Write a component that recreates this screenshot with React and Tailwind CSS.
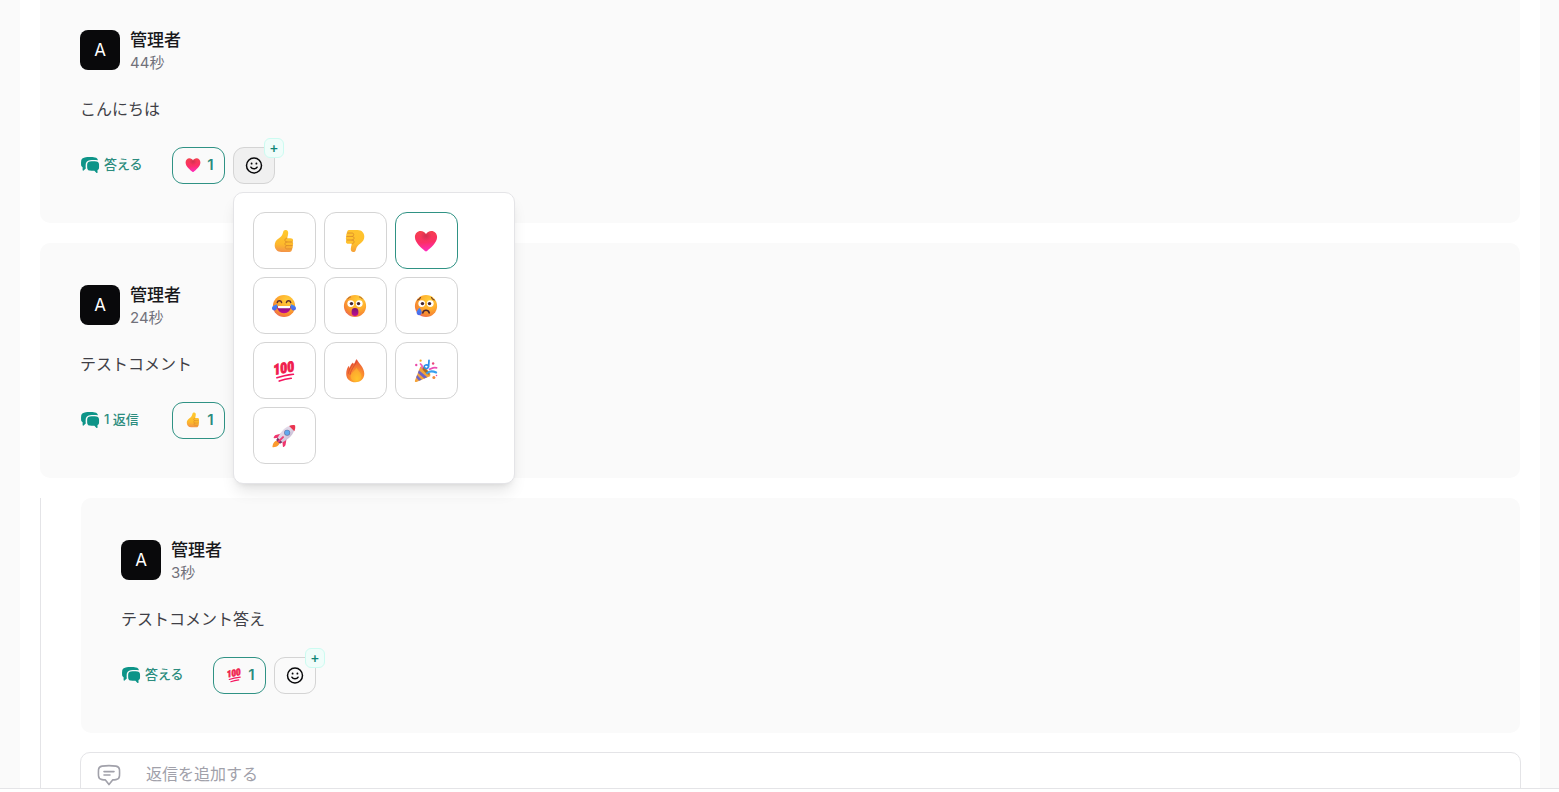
import React from "react";

function Gradients() {
  return (
    <svg className="absolute size-0" aria-hidden="true">
      <defs>
        <linearGradient id="skin" x1="0.4" y1="0" x2="0.3" y2="1">
          <stop offset="0" stopColor="#ffc92e" />
          <stop offset="0.65" stopColor="#fdb92c" />
          <stop offset="1" stopColor="#f3914a" />
        </linearGradient>
        <linearGradient id="skinDown" x1="0.6" y1="1" x2="0.5" y2="0">
          <stop offset="0" stopColor="#ffc42e" />
          <stop offset="0.6" stopColor="#ffc02c" />
          <stop offset="1" stopColor="#f5a03c" />
        </linearGradient>
        <radialGradient id="face" cx="0.65" cy="0.25" r="0.85">
          <stop offset="0" stopColor="#ffd03b" />
          <stop offset="0.45" stopColor="#ffaf2e" />
          <stop offset="0.8" stopColor="#f68433" />
          <stop offset="1" stopColor="#e8606c" />
        </radialGradient>
        <linearGradient id="heart" x1="0.4" y1="0" x2="0.5" y2="1">
          <stop offset="0" stopColor="#f4404e" />
          <stop offset="0.55" stopColor="#fb2f66" />
          <stop offset="1" stopColor="#ff2bc0" />
        </linearGradient>
        <radialGradient id="heartShade" cx="0.5" cy="0.24" r="0.26">
          <stop offset="0" stopColor="#b82a4c" stopOpacity="0.6" />
          <stop offset="1" stopColor="#b82a4c" stopOpacity="0" />
        </radialGradient>
        <linearGradient id="mouth" x1="0" y1="0" x2="0" y2="1">
          <stop offset="0" stopColor="#7c1573" />
          <stop offset="1" stopColor="#c10b95" />
        </linearGradient>
        <linearGradient id="tear" x1="0" y1="0" x2="0" y2="1">
          <stop offset="0" stopColor="#3f8df5" />
          <stop offset="1" stopColor="#4f63e8" />
        </linearGradient>
        <radialGradient id="flame" cx="0.6" cy="0.85" r="0.8">
          <stop offset="0" stopColor="#ffc62b" />
          <stop offset="0.45" stopColor="#fb8f2f" />
          <stop offset="1" stopColor="#e8533b" />
        </radialGradient>
        <linearGradient id="hull" x1="0" y1="0" x2="1" y2="1">
          <stop offset="0" stopColor="#e9e3ee" />
          <stop offset="0.5" stopColor="#ddd3e4" />
          <stop offset="1" stopColor="#b3a4c4" />
        </linearGradient>
      </defs>
    </svg>
  );
}

function Thumb({ fill }) {
  return (
    <>
      <path
        fill={fill}
        d="M14.800 4.200C15.200 2 16.600 1 18.400 1.200c2.400.2 3.400 2 3.200 4.400-.1 2.200-.7 4.400-1.500 6.600h4.600c2.100 0 3.400 1.200 3.400 2.900 0 1-.3 1.700-.9 2.200.7.600 1.100 1.400 1 2.500 0 1-.4 1.800-1 2.300.4.600.6 1.300.5 2.200-.1 1.100-.6 1.800-1.300 2.300.2.500.2 1 .1 1.500-.3 1.600-1.500 2.500-3.300 2.500H12.500C7 30.600 3.600 26.800 3.600 21.600c0-3.900 2-6.700 5.200-8.900 3.200-2.200 5.200-4.500 6-8.500z"
      />
      <path
        fill="none"
        stroke="#d98a2a"
        strokeWidth="1.100"
        strokeLinecap="round"
        d="M27.200 17.300h-7.400c-1.700 0-2.500-1-2.500-2.400s.9-2.600 2.600-2.700M27.200 22.100h-7.400c-1.700 0-2.500-.9-2.500-2.300s.9-2.400 2.500-2.500M26.400 26.600h-6.200c-1.700 0-2.500-.8-2.500-2.100s.8-2.300 2.100-2.400"
      />
    </>
  );
}

function Eyes() {
  return (
    <>
      <circle cx="10.300" cy="12.800" r="4.500" fill="#fff" />
      <circle cx="21.700" cy="12.800" r="4.500" fill="#fff" />
      <circle cx="11.300" cy="12.800" r="2.300" fill="#42242f" />
      <circle cx="20.700" cy="12.800" r="2.300" fill="#42242f" />
    </>
  );
}

const heartShape =
  "M8.900 2.600C4.700 2.600 1.200 6 1.200 10.800c0 8 9.300 15 13.400 18.600.9.800 1.900.8 2.800 0 4.100-3.600 13.400-10.600 13.400-18.600 0-4.800-3.500-8.200-7.700-8.200-3.200 0-5.900 1.900-7.100 4.400-1.200-2.500-3.900-4.400-7.100-4.400z";

const drawings = {
  up: <Thumb fill="url(#skin)" />,
  down: (
    <g transform="rotate(180 16 16)">
      <Thumb fill="url(#skinDown)" />
    </g>
  ),
  heart: (
    <>
      <path fill="url(#heart)" d={heartShape} />
      <path fill="url(#heartShade)" d={heartShape} />
    </>
  ),
  joy: (
    <>
      <circle cx="16" cy="16" r="14.800" fill="url(#face)" />
      <path
        d="M7 11.300c.8-3 5-3 5.800 0M19.200 11.300c.8-3 5-3 5.800 0"
        fill="none"
        stroke="#5b2a2e"
        strokeWidth="1.900"
        strokeLinecap="round"
      />
      <path d="M6.800 16h18.400c0 5.600-3.600 9.600-9.200 9.600S6.800 21.600 6.800 16z" fill="url(#mouth)" />
      <path d="M7.800 16h16.400v1.600c0 .9-.7 1.500-1.600 1.500H9.400c-.9 0-1.600-.6-1.600-1.500z" fill="#fff" />
      <path
        d="M6.900 13.600c.6 4.200-.5 8-3.300 8.300C1.400 22.100 0 20.700 0 18.900c0-2.900 3.500-4 6.900-5.300zM25.100 13.600c-.6 4.200.5 8 3.300 8.300 2.200.2 3.600-1.200 3.600-3 0-2.900-3.500-4-6.900-5.300z"
        fill="url(#tear)"
      />
    </>
  ),
  wow: (
    <>
      <circle cx="16" cy="16" r="14.800" fill="url(#face)" />
      <path
        d="M6.300 6.500c.8-1.400 2-2.200 3.600-2.500M25.700 6.500c-.8-1.400-2-2.200-3.600-2.500"
        fill="none"
        stroke="#a05a2c"
        strokeWidth="1.200"
        strokeLinecap="round"
      />
      <Eyes />
      <rect x="11.500" y="18.800" width="9" height="10.400" rx="4.500" fill="url(#mouth)" />
    </>
  ),
  cry: (
    <>
      <circle cx="16" cy="16" r="14.800" fill="url(#face)" />
      <path
        d="M5 8c1.600-.4 2.900-1.600 3.700-3.300M27 8c-1.600-.4-2.900-1.600-3.700-3.300"
        fill="none"
        stroke="#6b3a2a"
        strokeWidth="1.500"
        strokeLinecap="round"
      />
      <Eyes />
      <path
        d="M11.600 25.200c1.500-4.600 7.300-4.600 8.800 0"
        fill="none"
        stroke="#4a2430"
        strokeWidth="2"
        strokeLinecap="round"
      />
      <path d="M7.300 18.400c1.800 2.600 3 4.300 3 6.400 0 2.200-1.500 3.600-3.400 3.600s-3.400-1.400-3.400-3.600c0-2.100 1.700-3.800 3.800-6.400z" fill="url(#tear)" />
    </>
  ),
  hundred: (
    <>
      <g transform="rotate(-10 16 12)">
        <text
          x="15.500"
          y="18.500"
          textAnchor="middle"
          fontFamily="'Liberation Sans Narrow', 'Roboto Condensed', 'Open Sans', sans-serif"
          fontSize="19"
          fontWeight="700"
          fontStyle="italic"
          fill="#f01c4c"
          stroke="#f01c4c"
          strokeWidth="1.200"
        >
          100
        </text>
      </g>
      <path
        d="M6.500 25C13 22.600 20 21.200 28.500 20.300M9.600 29.400c4.800-1.700 9.800-3 16-3.700"
        fill="none"
        stroke="#f5155f"
        strokeWidth="2.200"
        strokeLinecap="round"
      />
    </>
  ),
  fire: (
    <>
      <path
        fill="url(#flame)"
        d="M17.200 1.300c.3-.7 1.300-.7 1.700 0 2.300 4.500 9.500 10.200 9.500 18.400C28.400 26.700 23.100 31 16.500 31S4.300 26.700 4.300 19.900c0-3.900 1-7.300 2.500-9.600.4-.7 1.300-.6 1.600.1l.8 1.900c.3-3.200 1.700-5.600 3.300-7 .6-.5 1.400-.2 1.500.5l.3 1.300c1.300-1.800 2.200-3.800 2.900-5.800z"
      />
      <path
        d="M17.800 3.400C16.600 8.500 11 12.300 9.400 20.500M12.600 7.500C9.800 11.500 7.800 14.800 7.400 19"
        fill="none"
        stroke="#d9482f"
        strokeWidth="1.100"
        strokeLinecap="round"
      />
      <path
        d="M18 11.500c1.800 3.600 6.400 6.500 6.400 11.300 0 4-3.400 6.700-7.600 6.700s-6.600-2.800-6.600-6.500c0-4.800 5.600-7 7.800-11.500z"
        fill="#ffc02d"
        opacity="0.55"
      />
    </>
  ),
  party: (
    <>
      <path d="M8.500 10 1.300 28.500c-.6 1.500.6 2.600 2 2L22 22.500z" fill="#f5a33a" />
      <path d="M6.600 14.900 17.600 24.400l-3.900 1.700L5.200 18.500zM4.100 21.300l6.200 6.200-3.600 1.600-3.800-4.500z" fill="#6b63c6" />
      <ellipse cx="15.300" cy="16.300" rx="3.200" ry="8.700" transform="rotate(-45 15.300 16.300)" fill="#f0a637" />
      <ellipse cx="15.700" cy="15.900" rx="1.900" ry="6.800" transform="rotate(-45 15.700 15.900)" fill="#a8682f" />
      <path
        d="M15.500 12.500c-2.300-.5-2.700-3.800 0-4.500 3-.7 4.900 1.500 3.300 3.500-1.400 1.700-3.200 1.200-3.300 1M19.400 10.500 20 1.800"
        stroke="#2f8fe8"
        strokeWidth="2.300"
        fill="none"
        strokeLinecap="round"
      />
      <path d="M17.500 18.700c3-2.500 7-3.200 12-.7" stroke="#35a0ef" strokeWidth="2.800" fill="none" strokeLinecap="round" />
      <path d="M20.800 13.500c2.400.8 3.200-3.400 9.400-1.700" stroke="#ec4fb4" strokeWidth="2.300" fill="none" strokeLinecap="round" />
      <path d="M10.800 12c.5-2.400-.2-4.200-2.200-5.400" stroke="#f062b8" strokeWidth="2.200" fill="none" strokeLinecap="round" />
      <circle cx="8.800" cy="2.200" r="1.500" fill="#f5a623" />
      <circle cx="3" cy="8" r="1.600" fill="#ea4aa8" />
      <circle cx="25.500" cy="6" r="1.600" fill="#e8467d" />
      <circle cx="26.500" cy="24.800" r="2" fill="#f08a3c" />
      <circle cx="30" cy="22" r="1" fill="#ea4aa8" />
    </>
  ),
  rocket: (
    <>
      <path d="M8 22.500c-3.300-.8-6.800 1.500-7.400 7.400-.1.800.4 1.300 1.200 1.200 5.700-.6 8.500-3.800 8-6.800z" fill="#fb9a2e" />
      <path d="M12.500 12.600 5 14.800c-1.200.4-2.300 1.700-2.800 3.300-.2.600.3 1 .9.900l5.700-.6zM19.400 19.500l-1.300 8.300c-.3 1.300-1.200 2.300-2.600 2.900-.6.200-1-.2-1-.8l-.6-5.800z" fill="#f0366e" />
      <path d="M29.800 2.200c1.200 6.600-2.500 12.800-8.500 17.300-3 2.300-6.500 4.500-8.800 5.300L7.200 19.500c.8-2.300 3-5.800 5.300-8.800C17 4.700 23.200 1 29.800 2.200z" fill="url(#hull)" />
      <path d="M22.800 2.500c2.300-.9 4.900-1.300 7.500-.9.300 0 .5.200.5.500.5 2.600.1 5.200-1 7.600z" fill="#ea3450" />
      <path d="M7.600 18.300l6.200 6.100-2.500 1.600c-.5.300-1.100.2-1.500-.2l-3.600-3.600c-.4-.4-.5-1-.2-1.500z" fill="#7a3566" />
      <path d="M14.700 17.500 9 23.200" stroke="#ed3f7a" strokeWidth="2.600" strokeLinecap="round" />
      <circle cx="20.200" cy="11.600" r="4" fill="#6577a8" />
      <circle cx="20.200" cy="11.600" r="3.200" fill="#5fa9ef" />
    </>
  ),
};

const names = {
  up: "いいね",
  down: "よくないね",
  heart: "ハート",
  joy: "うれし泣き",
  wow: "びっくり",
  cry: "泣き顔",
  hundred: "満点",
  fire: "炎",
  party: "お祝い",
  rocket: "ロケット",
};

function Emoji({ kind, className }) {
  return (
    <svg viewBox="0 0 32 32" className={className} aria-hidden="true">
      {drawings[kind]}
    </svg>
  );
}

function RepliesIcon() {
  return (
    <svg viewBox="0 0 20 20" className="size-5 shrink-0" fill="#0d9488" aria-hidden="true">
      <path d="M4.700 2.400c3.200-.5 7-.5 10.300 0 1.700.2 2.800 1.300 2.900 2.800-2.800-.3-5.600-.3-8 0C7 5.600 5.800 7.100 5.700 9.400c-.1 1.500-.1 2.800.1 4l-2.200 2.100c-.4.400-1 .1-1-.4v-2.900c-.9-.4-1.400-1.200-1.500-2.200-.1-1.500-.1-3 .1-4.500.2-1.600 1.600-2.800 3.500-3.100z" />
      <path d="M9.900 6.400c2.100-.3 4.400-.3 6.500 0 1.500.2 2.500 1.200 2.600 2.600.1 1.400.1 2.600 0 3.900-.1 1-.6 1.800-1.500 2.200v2.400c0 .5-.6.800-1 .4l-2.100-2.100c-1.600.1-3.200 0-4.600-.2-1.500-.2-2.500-1.300-2.600-2.700-.1-1.300-.1-2.500 0-3.900.1-1.400 1.200-2.400 2.700-2.600z" />
    </svg>
  );
}

function SmileIcon() {
  return (
    <svg viewBox="0 0 18 18" className="size-[18px]" fill="none" stroke="#09090b" strokeWidth="1.500" strokeLinecap="round" aria-hidden="true">
      <circle cx="9" cy="8.500" r="7.500" />
      <path d="M5.900 10.200c1.200 2.200 5 2.200 6.200 0" />
      <path d="M6.600 6.300v.4M11.400 6.300v.4" strokeWidth="1.800" />
    </svg>
  );
}

const choices = ["up", "down", "heart", "joy", "wow", "cry", "hundred", "fire", "party", "rocket"];

function Picker({ selected }) {
  return (
    <div
      role="dialog"
      aria-label="リアクション"
      className="absolute left-0 top-full z-10 mt-2 flex w-[282px] flex-wrap gap-2 rounded-[10px] border border-[#e4e4e7] bg-white p-[19px] shadow-lg"
    >
      {choices.map((kind) => (
        <button
          key={kind}
          type="button"
          aria-label={names[kind]}
          aria-pressed={kind === selected}
          className={
            kind === selected
              ? "flex h-[57px] w-[63px] items-center justify-center rounded-xl border border-[#2f9284] pr-px"
              : "flex h-[57px] w-[63px] items-center justify-center rounded-xl border border-[#d4d4d4] pr-px"
          }
        >
          <Emoji kind={kind} className="size-6 overflow-visible" />
        </button>
      ))}
    </div>
  );
}

function Comment({ time, text, replies, reaction, open, first }) {
  return (
    <article
      className={
        first
          ? "rounded-b-[10px] bg-[#fafafa] px-10 pb-[39px] pt-[30px]"
          : "rounded-[10px] bg-[#fafafa] px-10 pb-[39px] pt-[42px]"
      }
    >
      <header className="flex h-10 gap-2.5">
        <div className="flex size-10 items-center justify-center rounded-lg bg-[#09090b] text-[17px] leading-6 text-white">A</div>
        <div>
          <h3 className="text-[17px] font-medium leading-[21px] text-[#18181b]">管理者</h3>
          <p className="text-[15px] leading-6 text-[#71717a]">{time}</p>
        </div>
      </header>
      <p className="mt-6 text-base leading-[30px] text-[#3f3f46]">{text}</p>
      <div className="mt-[23px] flex h-[37px] items-center gap-2">
        <button type="button" className="flex h-[37px] w-[84px] items-center gap-1 whitespace-nowrap pb-0.5 text-[13px] font-medium text-[#2c8c7e]">
          <RepliesIcon />
          {replies}
        </button>
        <button
          type="button"
          aria-label={names[reaction] + " 1"}
          className="flex h-[37px] w-[53px] items-center justify-center gap-1.5 rounded-[11px] border border-[#2f9284] pb-px pl-0.5 text-[15px] font-semibold text-[#2c8c7e]"
        >
          <Emoji kind={reaction} className="size-4 overflow-visible" />1
        </button>
        <div className="relative">
          <button
            type="button"
            aria-label="リアクションを追加"
            className={
              open
                ? "flex h-[37px] w-[42px] items-center justify-center rounded-[11px] border border-[#d4d4d4] bg-[#f0f0f0]"
                : "flex h-[37px] w-[42px] items-center justify-center rounded-[11px] border border-[#d4d4d4]"
            }
          >
            <SmileIcon />
          </button>
          <span className="absolute -right-[9px] -top-[9px] flex size-5 items-center justify-center rounded-md border border-[#ccfbf1] bg-[#f0fdfa] text-sm font-medium leading-none text-[#0f8577]">
            +
          </span>
          {open && <Picker selected={reaction} />}
        </div>
      </div>
    </article>
  );
}

export default function App() {
  return (
    <div className="flex h-screen flex-col bg-white font-[Inter,'Noto_Sans_CJK_JP',sans-serif]" lang="ja">
      <Gradients />
      <div className="min-h-0 flex-1 overflow-hidden bg-[#fafafa] pl-5 pr-[19px]">
        <main className="flex min-h-full flex-col gap-5 bg-white px-5">
          <Comment first open time="44秒" text="こんにちは" replies="答える" reaction="heart" />
          <Comment time="24秒" text="テストコメント" replies="1 返信" reaction="up" />
          <section className="flex flex-col gap-[19px] border-l border-[#e4e4e7] pl-10">
            <Comment time="3秒" text="テストコメント答え" replies="答える" reaction="hundred" />
            <label className="-mx-px flex h-[46px] items-center gap-[25px] rounded-[10px] border border-[#e4e4e7] px-4">
              <svg viewBox="0 0 24 24" className="size-6 shrink-0" fill="none" stroke="#a1a1aa" strokeWidth="1.600" strokeLinecap="round" strokeLinejoin="round" aria-hidden="true">
                <path d="M5 3.100c4.700-.7 9.300-.7 14 0 2.200.3 3.400 1.700 3.500 3.700.1 2.100.1 4 0 6-.1 2.300-1.300 3.500-3.500 3.800-1.200.2-2.200.3-3.400.3L12 21.600l-3.600-4.700c-1.200 0-2.200-.1-3.400-.3-2.200-.3-3.400-1.500-3.500-3.800-.1-2-.1-3.900 0-6C1.600 4.800 2.800 3.400 5 3.100z" />
                <path d="M7 8.600h10M7 12h6" />
              </svg>
              <input
                type="text"
                aria-label="返信を追加する"
                placeholder="返信を追加する"
                className="min-w-0 flex-1 bg-transparent pb-0.5 text-base leading-6 outline-none placeholder:text-[#a1a1aa]"
              />
            </label>
          </section>
        </main>
      </div>
      <footer className="h-1 border-t border-[#e4e4e7] bg-white" />
    </div>
  );
}
